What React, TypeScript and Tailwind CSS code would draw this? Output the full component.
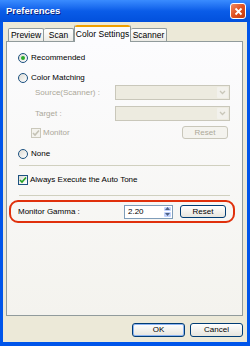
const font = "font-['Liberation_Sans',Arial,sans-serif]";

function Radio({ checked }: { checked?: boolean }) {
  return (
    <span className="flex h-[10px] w-[10px] shrink-0 items-center justify-center rounded-full border border-[#1C5180] bg-gradient-to-br from-[#DCDBD4] to-white">
      {checked && <span className="h-[4px] w-[4px] rounded-full bg-[#2AAA2A]" />}
    </span>
  );
}

function Check({ disabled }: { disabled?: boolean }) {
  return (
    <span
      className={
        'flex h-[10px] w-[10px] shrink-0 items-center justify-center border ' +
        (disabled ? 'border-[#CAC8BB] bg-[#F4F3EE]' : 'border-[#1C5180] bg-gradient-to-br from-[#DCDBD4] to-white')
      }
    >
      <svg width="8" height="8" viewBox="0 0 8 8">
        <path d="M1 4 L3 6 L7 1.5" fill="none" stroke={disabled ? '#C4C2B5' : '#21A121'} strokeWidth="1.6" />
      </svg>
    </span>
  );
}

function Combo() {
  return (
    <div className="flex h-[15px] w-[115px] border border-[#C9C7BA] bg-[#EDEBE0] p-[1px]">
      <div className="flex-1" />
      <div className="flex w-[11px] items-center justify-center rounded-[1px] bg-[#F2F1EC]">
        <svg width="7" height="5" viewBox="0 0 7 5">
          <path d="M1 1 L3.5 3.5 L6 1" fill="none" stroke="#C9C7BA" strokeWidth="1.3" />
        </svg>
      </div>
    </div>
  );
}

function Btn({ label, disabled, primary, w = 'w-[53px]', h = 'h-[14px]' }: { label: string; disabled?: boolean; primary?: boolean; w?: string; h?: string }) {
  return (
    <div
      className={
        `flex ${w} ${h} items-center justify-center rounded-[3px] border text-[8px] ` +
        (disabled
          ? 'border-[#C9C7BA] bg-[#F4F3EE] text-[#ACA899]'
          : 'border-[#003C74] bg-gradient-to-b from-white to-[#E6E5DE] text-black') +
        (primary ? ' shadow-[inset_0_0_0_1px_#8CB4F2]' : '')
      }
    >
      {label}
    </div>
  );
}

function Separator() {
  return <div className="ml-[12px] h-[1px] w-[211px] bg-[#D0D0BF]" />;
}

export default function App() {
  return (
    <div className={`${font} flex h-[346px] w-[250px] flex-col bg-[#0055EA] text-black`}>
      {/* title bar */}
      <div className="flex h-[22px] items-center justify-between bg-gradient-to-b from-[#3A8CFF] via-[#0A5CE8] to-[#0250DC] pl-[6px] pr-[4px]">
        <span className="text-[9.5px] font-bold text-white [text-shadow:1px_1px_0_#0A1E7A]">Preferences</span>
        <div className="flex h-[16px] w-[16px] items-center justify-center rounded-[3px] border border-white bg-gradient-to-br from-[#F08A60] via-[#E0501F] to-[#C43A10]">
          <svg width="9" height="9" viewBox="0 0 9 9">
            <path d="M1.5 1.5 L7.5 7.5 M7.5 1.5 L1.5 7.5" stroke="white" strokeWidth="1.8" />
          </svg>
        </div>
      </div>

      {/* body */}
      <div className="mx-[3px] mb-[4px] flex flex-1 flex-col bg-[#ECE9D8]">
        {/* tabs */}
        <div className="flex items-end pl-[5px] pt-[3px] text-[8.5px]">
          <div className="flex h-[13px] w-[36px] items-center justify-center rounded-t-[2px] border border-b-0 border-[#919B9C] bg-gradient-to-b from-white to-[#ECEBE6]">Preview</div>
          <div className="flex h-[13px] w-[30px] items-center justify-center rounded-t-[2px] border border-b-0 border-l-0 border-[#919B9C] bg-gradient-to-b from-white to-[#ECEBE6]">Scan</div>
          <div className="relative z-10 -mb-[1px] flex h-[17px] w-[57px] flex-col rounded-t-[2px] border-x border-[#919B9C] bg-[#FCFCFE]">
            <div className="h-[2px] rounded-t-[2px] bg-[#F0A000]" />
            <div className="flex flex-1 items-center justify-center">Color Settings</div>
          </div>
          <div className="flex h-[13px] w-[36px] items-center justify-center rounded-t-[2px] border border-b-0 border-l-0 border-[#919B9C] bg-gradient-to-b from-white to-[#ECEBE6]">Scanner</div>
        </div>

        {/* panel */}
        <div className="ml-[3px] mr-[4px] flex h-[275px] flex-col border border-[#919B9C] bg-gradient-to-b from-[#FCFCFE] to-[#F4F3EE] pt-[9px] text-[8px]">
          <div className="flex h-[14px] items-center gap-[3px] pl-[11px]">
            <Radio checked />
            <span>Recommended</span>
          </div>
          <div className="mt-[6px] flex h-[14px] items-center gap-[3px] pl-[11px]">
            <Radio />
            <span>Color Matching</span>
          </div>
          <div className="flex h-[15px] items-center pl-[28px] text-[#ACA899]">
            <span className="w-[80px]">Source(Scanner) :</span>
            <Combo />
          </div>
          <div className="mt-[6px] flex h-[15px] items-center pl-[28px] text-[#ACA899]">
            <span className="w-[80px]">Target :</span>
            <Combo />
          </div>
          <div className="mt-[5px] flex h-[13px] items-center pl-[24px] text-[#ACA899]">
            <Check disabled />
            <span className="ml-[2px] flex-1">Monitor</span>
            <div className="mr-[14px]">
              <Btn label="Reset" disabled w="w-[46px]" h="h-[13px]" />
            </div>
          </div>
          <div className="mt-[8px] flex h-[14px] items-center gap-[3px] pl-[11px]">
            <Radio />
            <span>None</span>
          </div>
          <div className="mt-[4px]">
            <Separator />
          </div>
          <div className="mt-[7px] flex h-[14px] items-center gap-[2px] pl-[11px]">
            <Check />
            <span>Always Execute the Auto Tone</span>
          </div>
          <div className="mt-[8px]">
            <Separator />
          </div>
          <div className="ml-[2px] mt-[4px] flex h-[23px] w-[226px] items-center rounded-[9px] border-[2.5px] border-[#E0300C] pl-[7px]">
            <span className="w-[106px]">Monitor Gamma :</span>
            <div className="flex h-[14px] w-[49px] border border-[#7F9DB9] bg-white">
              <span className="flex flex-1 items-center pl-[3px]">2.20</span>
              <div className="flex w-[9px] flex-col gap-[1px] p-[1px]">
                <div className="flex flex-1 items-center justify-center rounded-[1px] bg-[#C3D3FD]">
                  <svg width="5" height="3" viewBox="0 0 5 3"><path d="M0 3 L2.5 0 L5 3Z" fill="#4D6185" /></svg>
                </div>
                <div className="flex flex-1 items-center justify-center rounded-[1px] bg-[#C3D3FD]">
                  <svg width="5" height="3" viewBox="0 0 5 3"><path d="M0 0 L2.5 3 L5 0Z" fill="#4D6185" /></svg>
                </div>
              </div>
            </div>
            <div className="ml-[7px]">
              <Btn label="Reset" w="w-[46px]" h="h-[13px]" />
            </div>
          </div>
        </div>

        {/* footer buttons */}
        <div className="mr-[4px] mt-[7px] flex justify-end gap-[5px]">
          <Btn label="OK" primary />
          <Btn label="Cancel" />
        </div>
      </div>
    </div>
  );
}
